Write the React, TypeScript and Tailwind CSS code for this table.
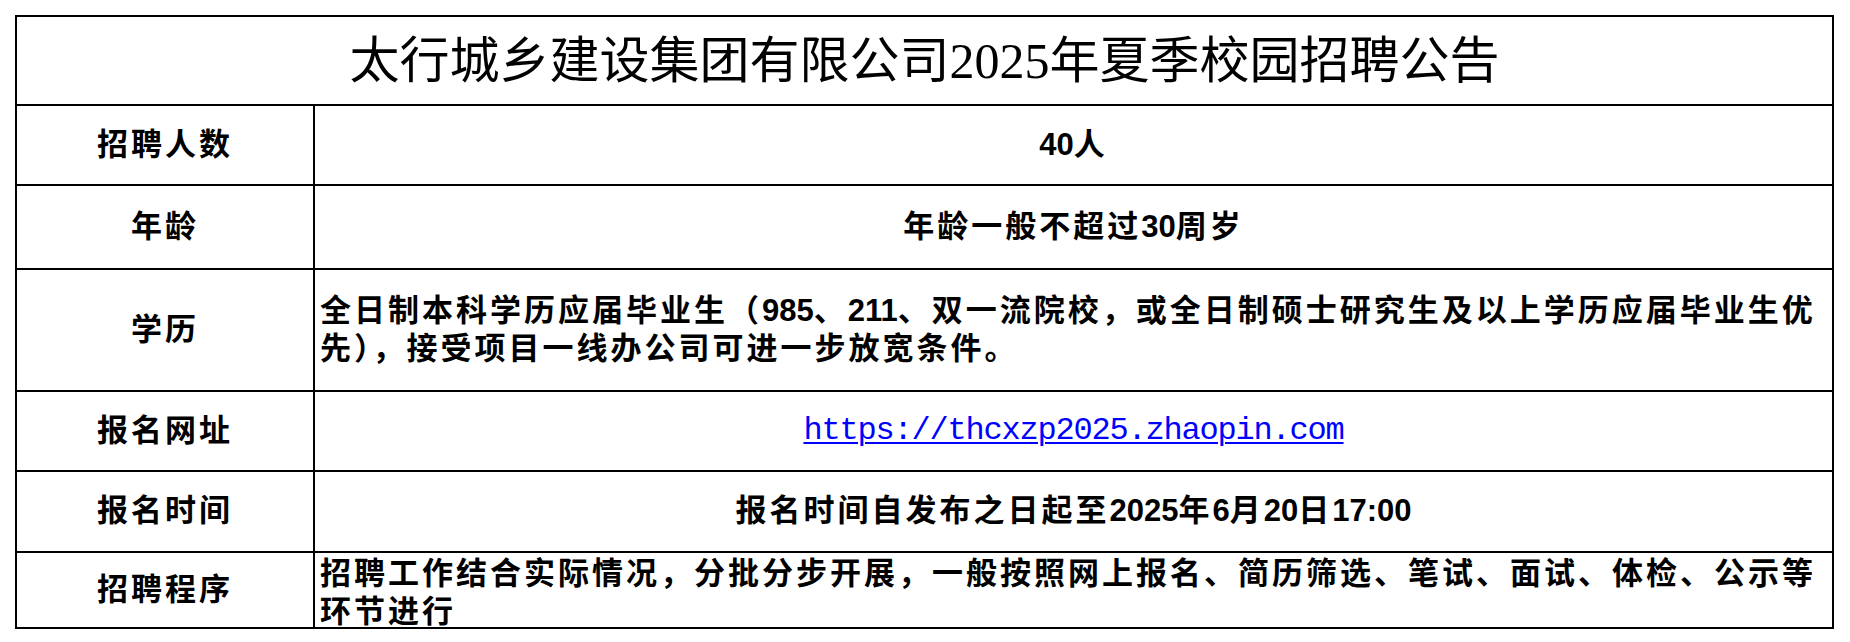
import React from "react";

const body = "font-['Liberation_Sans','Noto_Sans_CJK_SC',sans-serif] font-bold text-[31px] tracking-[3px] text-black";

function D({ children }: { children: React.ReactNode }) {
  return <span className="tracking-[0px]">{children}</span>;
}

function Row({
  label,
  h,
  children,
  align = "center",
}: {
  label: string;
  h: string;
  children: React.ReactNode;
  align?: "center" | "left";
}) {
  return (
    <div className={`flex border-t-2 border-black ${h}`}>
      <div className={`w-[296px] shrink-0 flex items-center justify-center ${body}`}>{label}</div>
      <div
        className={`flex-1 border-l-2 border-black flex items-center ${
          align === "center" ? "justify-center" : "justify-start pl-[5px]"
        } ${body}`}
      >
        {children}
      </div>
    </div>
  );
}

export default function App() {
  return (
    <div className="w-[1850px] h-[642px] bg-white pt-[15px] pl-[15px]">
      <div className="w-[1819px] border-2 border-black">
        <div className="h-[87px] flex items-center justify-center">
          <span className="font-['Liberation_Serif','Noto_Sans_CJK_SC',serif] font-normal text-[50px] text-black leading-none">
            太行城乡建设集团有限公司2025年夏季校园招聘公告
          </span>
        </div>
        <Row label="招聘人数" h="h-[80px]">
          <D>40</D>人
        </Row>
        <Row label="年龄" h="h-[84px]">
          年龄一般不超过<D>30</D>周岁
        </Row>
        <Row label="学历" h="h-[122px]" align="left">
          <div className="leading-[38px] whitespace-nowrap">
            全日制本科学历应届毕业生（<D>985</D>、<D>211</D>、双一流院校，或全日制硕士研究生及以上学历应届毕业生优
            <br />
            先），接受项目一线办公司可进一步放宽条件。
          </div>
        </Row>
        <Row label="报名网址" h="h-[80px]">
          <span className="font-['Liberation_Mono',monospace] font-normal text-[32px] tracking-[-1.2px] text-[#0000ff] underline underline-offset-[3px] decoration-[2px]">
            https://thcxzp2025.zhaopin.com
          </span>
        </Row>
        <Row label="报名时间" h="h-[81px]">
          报名时间自发布之日起至<D>2025</D>年<D>6</D>月<D>20</D>日<D>17:00</D>
        </Row>
        <Row label="招聘程序" h="h-[76px]" align="left">
          <div className="leading-[38px] whitespace-nowrap pt-[6px]">
            招聘工作结合实际情况，分批分步开展，一般按照网上报名、简历筛选、笔试、面试、体检、公示等
            <br />
            环节进行
          </div>
        </Row>
      </div>
    </div>
  );
}
